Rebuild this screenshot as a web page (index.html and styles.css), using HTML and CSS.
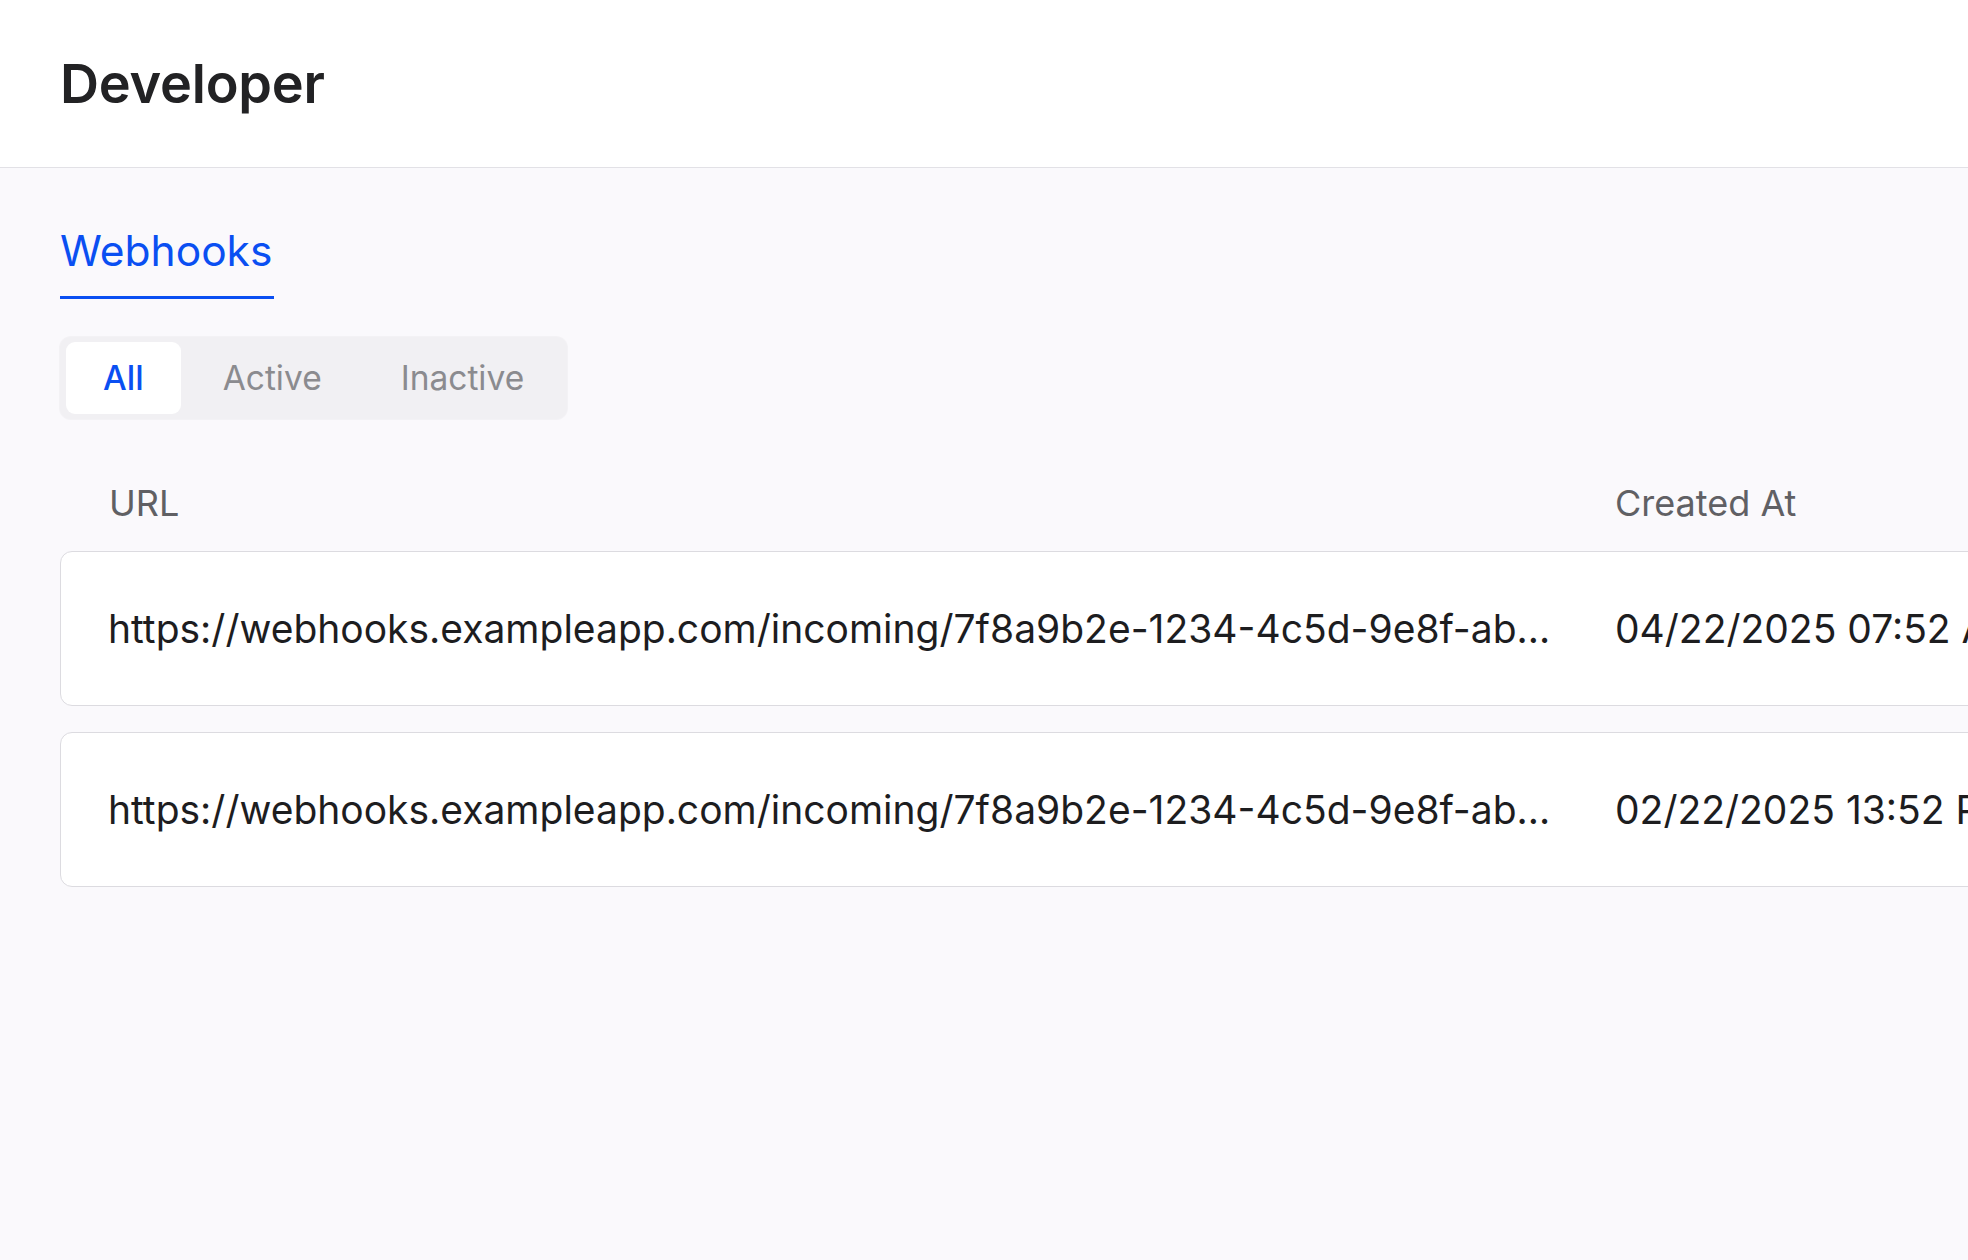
FILE: index.html
```html
<!DOCTYPE html>
<html lang="en">
<head>
<meta charset="utf-8">
<title>Developer</title>
<link rel="stylesheet" href="styles.css">
</head>
<body>
  <header class="topbar">
    <h1 class="page-title">Developer</h1>
  </header>
  <main class="content">
    <nav class="tabs">
      <a class="tab tab-active">Webhooks</a>
    </nav>
    <div class="segmented">
      <button class="seg seg-active">All</button>
      <button class="seg">Active</button>
      <button class="seg">Inactive</button>
    </div>
    <div class="table">
      <div class="thead">
        <div class="cell col-url">URL</div>
        <div class="cell col-date">Created At</div>
        <div class="cell col-status">Status</div>
        <div class="cell col-actions"></div>
      </div>
      <div class="rows">
        <div class="row">
          <div class="cell col-url"><span class="truncate">https://webhooks.exampleapp.com/incoming/7f8a9b2e-1234-4c5d-9e8f-abcdef123456</span></div>
          <div class="cell col-date">04/22/2025 07:52 AM</div>
          <div class="cell col-status">Active</div>
          <div class="cell col-actions"></div>
        </div>
        <div class="row">
          <div class="cell col-url"><span class="truncate">https://webhooks.exampleapp.com/incoming/7f8a9b2e-1234-4c5d-9e8f-abcdef123456</span></div>
          <div class="cell col-date">02/22/2025 13:52 PM</div>
          <div class="cell col-status">Inactive</div>
          <div class="cell col-actions"></div>
        </div>
      </div>
    </div>
  </main>
</body>
</html>
```
FILE: styles.css
```css
* { box-sizing: border-box; }

html, body {
  margin: 0;
  padding: 0;
}

body {
  background: #faf9fc;
  font-family: Inter, "Noto Sans", "Liberation Sans", sans-serif;
  color: #1d1d1f;
  overflow: hidden;
  width: 1968px;
  height: 1260px;
}

.topbar {
  height: 168px;
  background: #ffffff;
  border-bottom: 1px solid #e2e1e6;
  display: flex;
  align-items: center;
  padding: 0 60px;
}

.page-title {
  margin: 0;
  font-size: 54px;
  font-weight: 600;
  color: #222224;
  letter-spacing: -0.2px;
}

.content {
  padding: 59px 0 0 60px;
}

.tabs {
  display: flex;
}

.tab {
  font-size: 42.5px;
  line-height: 48px;
  font-weight: 400;
  color: #0a4ff2;
  padding: 0 2px 21px 0;
  border-bottom: 3px solid #0a4ff2;
}

.segmented {
  margin-top: 38px;
  display: inline-flex;
  gap: 5px;
  padding: 5px 6px;
  background: #f1f0f3;
  border-radius: 11px;
  box-shadow: 0 0 0 1px #f3f2f5;
}

.seg {
  font-family: inherit;
  border: none;
  background: transparent;
  height: 72px;
  padding: 0 37px;
  font-size: 33.5px;
  font-weight: 400;
  color: #8b8b8f;
  border-radius: 9px;
}

.seg-active {
  background: #ffffff;
  color: #0a4ff2;
  font-weight: 500;
}

.table {
  margin-top: 36px;
  width: 2600px;
}

.thead {
  display: flex;
  align-items: center;
  height: 96px;
  padding-left: 49px;
  font-size: 36px;
  color: #606064;
}

.rows {
  display: flex;
  flex-direction: column;
  gap: 26px;
}

.row {
  display: flex;
  align-items: center;
  height: 155px;
  padding-left: 47px;
  background: #ffffff;
  border: 1px solid #dcdbe0;
  border-radius: 12px;
  font-size: 39px;
  color: #1d1d1f;
}

.cell {
  white-space: nowrap;
}

.thead .col-url {
  width: 1506px;
}

.row .col-url {
  width: 1507px;
  padding-right: 57px;
  overflow: hidden;
}

.truncate {
  display: block;
  overflow: hidden;
  text-overflow: ellipsis;
  white-space: nowrap;
}

.col-date {
  width: 520px;
}

.col-status {
  width: 300px;
}
```
